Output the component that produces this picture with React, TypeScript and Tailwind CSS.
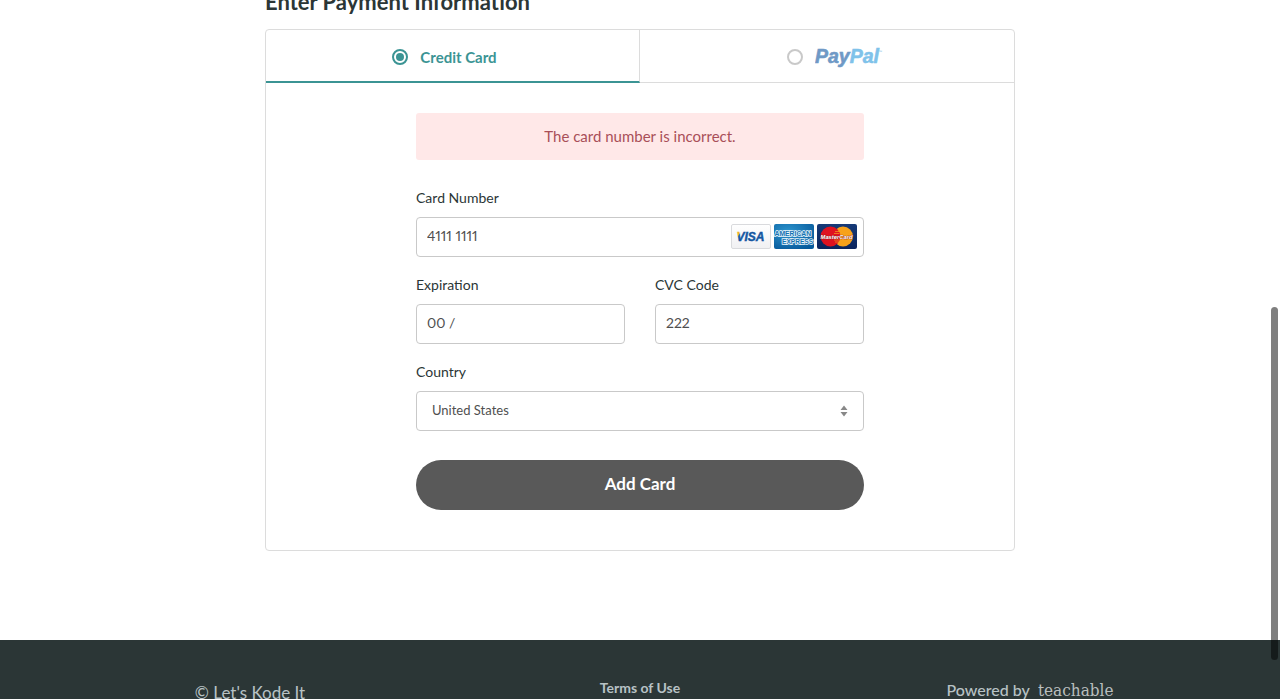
import { useState } from "react";
import type { ReactNode } from "react";

function VisaLogo() {
  return (
    <svg viewBox="0 0 40 25" className="h-[25px] w-10" role="img" aria-label="Visa">
      <defs>
        <linearGradient id="visa-bg" x1="0" y1="0" x2="0" y2="1">
          <stop offset="0" stopColor="#ffffff" />
          <stop offset="1" stopColor="#f0f0f2" />
        </linearGradient>
        <linearGradient id="visa-ink" gradientUnits="userSpaceOnUse" x1="6" y1="8" x2="11" y2="11">
          <stop offset="0.45" stopColor="#f0b428" />
          <stop offset="0.6" stopColor="#16559f" />
        </linearGradient>
      </defs>
      <rect x="0.5" y="0.5" width="39" height="24" rx="1.5" fill="url(#visa-bg)" stroke="#d9dadd" />
      <text x="5.500" y="17" fontFamily="Liberation Sans, sans-serif" fontWeight="700" fontStyle="italic" fontSize="12" fill="url(#visa-ink)" stroke="url(#visa-ink)" strokeWidth="0.400">
        VISA
      </text>
    </svg>
  );
}

function AmexLogo() {
  return (
    <svg viewBox="0 0 40 25" className="h-[25px] w-10" role="img" aria-label="American Express">
      <defs>
        <radialGradient id="amex-bg" cx="0.35" cy="0.3" r="0.8">
          <stop offset="0" stopColor="#2c93cc" />
          <stop offset="1" stopColor="#075a9c" />
        </radialGradient>
      </defs>
      <rect width="40" height="25" rx="2" fill="url(#amex-bg)" />
      <g fontFamily="Liberation Sans, sans-serif" fontWeight="700" fill="#1472b1" stroke="#e8f5fc" strokeWidth="1.5" paintOrder="stroke">
        <text x="0.500" y="12" fontSize="6.800">AMERICAN</text>
        <text x="8" y="20" fontSize="6.600">EXPRESS</text>
      </g>
    </svg>
  );
}

function MasterCardLogo() {
  return (
    <svg viewBox="0 0 40 25" className="h-[25px] w-10" role="img" aria-label="MasterCard">
      <defs>
        <linearGradient id="mc-bg" x1="0" y1="0" x2="0" y2="1">
          <stop offset="0" stopColor="#163a78" />
          <stop offset="1" stopColor="#0b245c" />
        </linearGradient>
      </defs>
      <rect width="40" height="25" rx="2" fill="url(#mc-bg)" />
      <circle cx="26" cy="12.5" r="10" fill="#f7a21b" />
      <circle cx="13.5" cy="12.500" r="10" fill="#df1220" />
      <path d="M18 7.500h4M17 9.500h5.500M17 16h5.500M18 18h4" fill="none" stroke="#f7a21b" strokeWidth="0.700" />
      <text x="19.500" y="15" textAnchor="middle" fontFamily="Liberation Sans, sans-serif" fontWeight="700" fontStyle="italic" fontSize="5.800" fill="#ffffff" stroke="#8f1a1f" strokeWidth="0.600" paintOrder="stroke">
        MasterCard
      </text>
    </svg>
  );
}

function PayPalLogo() {
  return (
    <svg viewBox="0 0 68 30" className="h-[30px] w-[68px]" role="img" aria-label="PayPal">
      <text x="0" y="21" fontFamily="Liberation Sans, sans-serif" fontWeight="700" fontStyle="italic" fontSize="19.500" strokeWidth="0.600">
        <tspan fill="#6f99c6" stroke="#6f99c6">Pay</tspan>
        <tspan fill="#7fc2ea" stroke="#7fc2ea">Pal</tspan>
      </text>
      <text x="63" y="11" fontFamily="Liberation Sans, sans-serif" fontSize="4" fill="#8cc5e8">™</text>
    </svg>
  );
}

type TabProps = { value: string; selected: boolean; onSelect: () => void; className: string; children: ReactNode };

function PaymentTab({ value, selected, onSelect, className, children }: TabProps) {
  const underline = selected ? "border-b-2 border-b-[#3b9494]" : "border-b border-b-[#dcdcdc]";
  return (
    <label className={`flex h-[53px] cursor-pointer items-center justify-center gap-3 pt-[2px] ${underline} ${className}`}>
      <input
        type="radio"
        name="payment"
        value={value}
        checked={selected}
        onChange={onSelect}
        className="size-4 appearance-none rounded-full border-2 border-[#c9c9c9] bg-white p-[2px] checked:border-[#3b9494] checked:bg-[#3b9494] checked:bg-clip-content"
      />
      {children}
    </label>
  );
}

const labelClass = "mb-[9px] block text-sm leading-5 text-[#2b3636]";
const fieldClass =
  "block h-10 w-full rounded border border-[#c9c9c9] bg-white px-[10px] pb-1 text-sm proportional-nums text-[#4f4f4f] outline-none";

export default function App() {
  const [method, setMethod] = useState("card");
  return (
    <div className="relative flex h-screen flex-col overflow-hidden bg-white font-['Lato',sans-serif]">
      <main className="mx-auto w-full max-w-[750px] shrink-0 pb-[89px]">
        <h1 className="-mt-3 mb-[13px] text-[22px] leading-7 font-bold text-[#2b3636]">Enter Payment Information</h1>
        <section className="rounded border border-[#dcdcdc]">
          <div className="grid grid-cols-2">
            <PaymentTab
              value="card"
              selected={method === "card"}
              onSelect={() => setMethod("card")}
              className="border-r border-r-[#dcdcdc] pr-4"
            >
              <span className="text-[15px] leading-5 font-bold text-[#3b9494]">Credit Card</span>
            </PaymentTab>
            <PaymentTab value="paypal" selected={method === "paypal"} onSelect={() => setMethod("paypal")} className="pl-4">
              <PayPalLogo />
            </PaymentTab>
          </div>
          <form className="mx-auto w-full max-w-[448px] pt-[30px] pb-10" onSubmit={(e) => e.preventDefault()}>
            <p role="alert" className="mb-7 rounded-[3px] bg-[#ffe8e8] pt-[11px] pb-3 text-center text-[15px] leading-6 text-[#a94f58]">
              The card number is incorrect.
            </p>
            <div className="mb-[18px]">
              <label htmlFor="number" className={labelClass}>Card Number</label>
              <div className="relative">
                <input id="number" type="text" defaultValue="4111 1111" className={fieldClass} />
                <div className="pointer-events-none absolute top-[7px] right-[7px] flex gap-[3px]">
                  <VisaLogo />
                  <AmexLogo />
                  <MasterCardLogo />
                </div>
              </div>
            </div>
            <div className="mb-[18px] grid grid-cols-2 gap-[30px]">
              <div>
                <label htmlFor="expiration" className={labelClass}>Expiration</label>
                <input id="expiration" type="text" defaultValue="00 /" className={fieldClass} />
              </div>
              <div>
                <label htmlFor="cvc" className={labelClass}>CVC Code</label>
                <input id="cvc" type="text" defaultValue="222" className={fieldClass} />
              </div>
            </div>
            <div className="mb-[29px]">
              <label htmlFor="country" className={labelClass}>Country</label>
              <div className="relative">
                <select
                  id="country"
                  defaultValue="US"
                  className="block h-10 w-full appearance-none rounded border border-[#c9c9c9] bg-white px-[15px] text-[13px] text-[#4f4f4f] outline-none"
                >
                  <option value="US">United States</option>
                </select>
                <svg viewBox="0 0 8 12" className="pointer-events-none absolute top-[14px] right-4 h-3 w-2" aria-hidden="true">
                  <path d="M4 0.500L7.500 5H0.500zM4 11.500L7.500 7H0.500z" fill="#888888" />
                </svg>
              </div>
            </div>
            <button type="submit" className="block h-[50px] w-full rounded-full bg-[#595959] pb-[2px] text-[17px] font-bold text-white">
              Add Card
            </button>
          </form>
        </section>
      </main>
      <footer className="flex-1 bg-[#2b3636] pt-[38px] text-[#b8c2c5]">
        <div className="mx-auto grid max-w-[1170px] grid-cols-3 text-center">
          <p className="pt-[3px] text-[17px] leading-6">© Let's Kode It</p>
          <p className="text-sm leading-5 font-bold">
            <a href="#terms">Terms of Use</a>
          </p>
          <p className="flex items-baseline justify-center gap-2 text-base leading-6 font-medium">
            <span>Powered by</span>
            <a href="#teachable" className="font-['DejaVu_Serif_Condensed','DejaVu_Serif',serif] text-[17px] text-[#b9bebe]">teachable</a>
          </p>
        </div>
      </footer>
      <div className="absolute top-[307px] right-[2px] h-[353px] w-[7px] rounded-full bg-black/50" aria-hidden="true" />
    </div>
  );
}
